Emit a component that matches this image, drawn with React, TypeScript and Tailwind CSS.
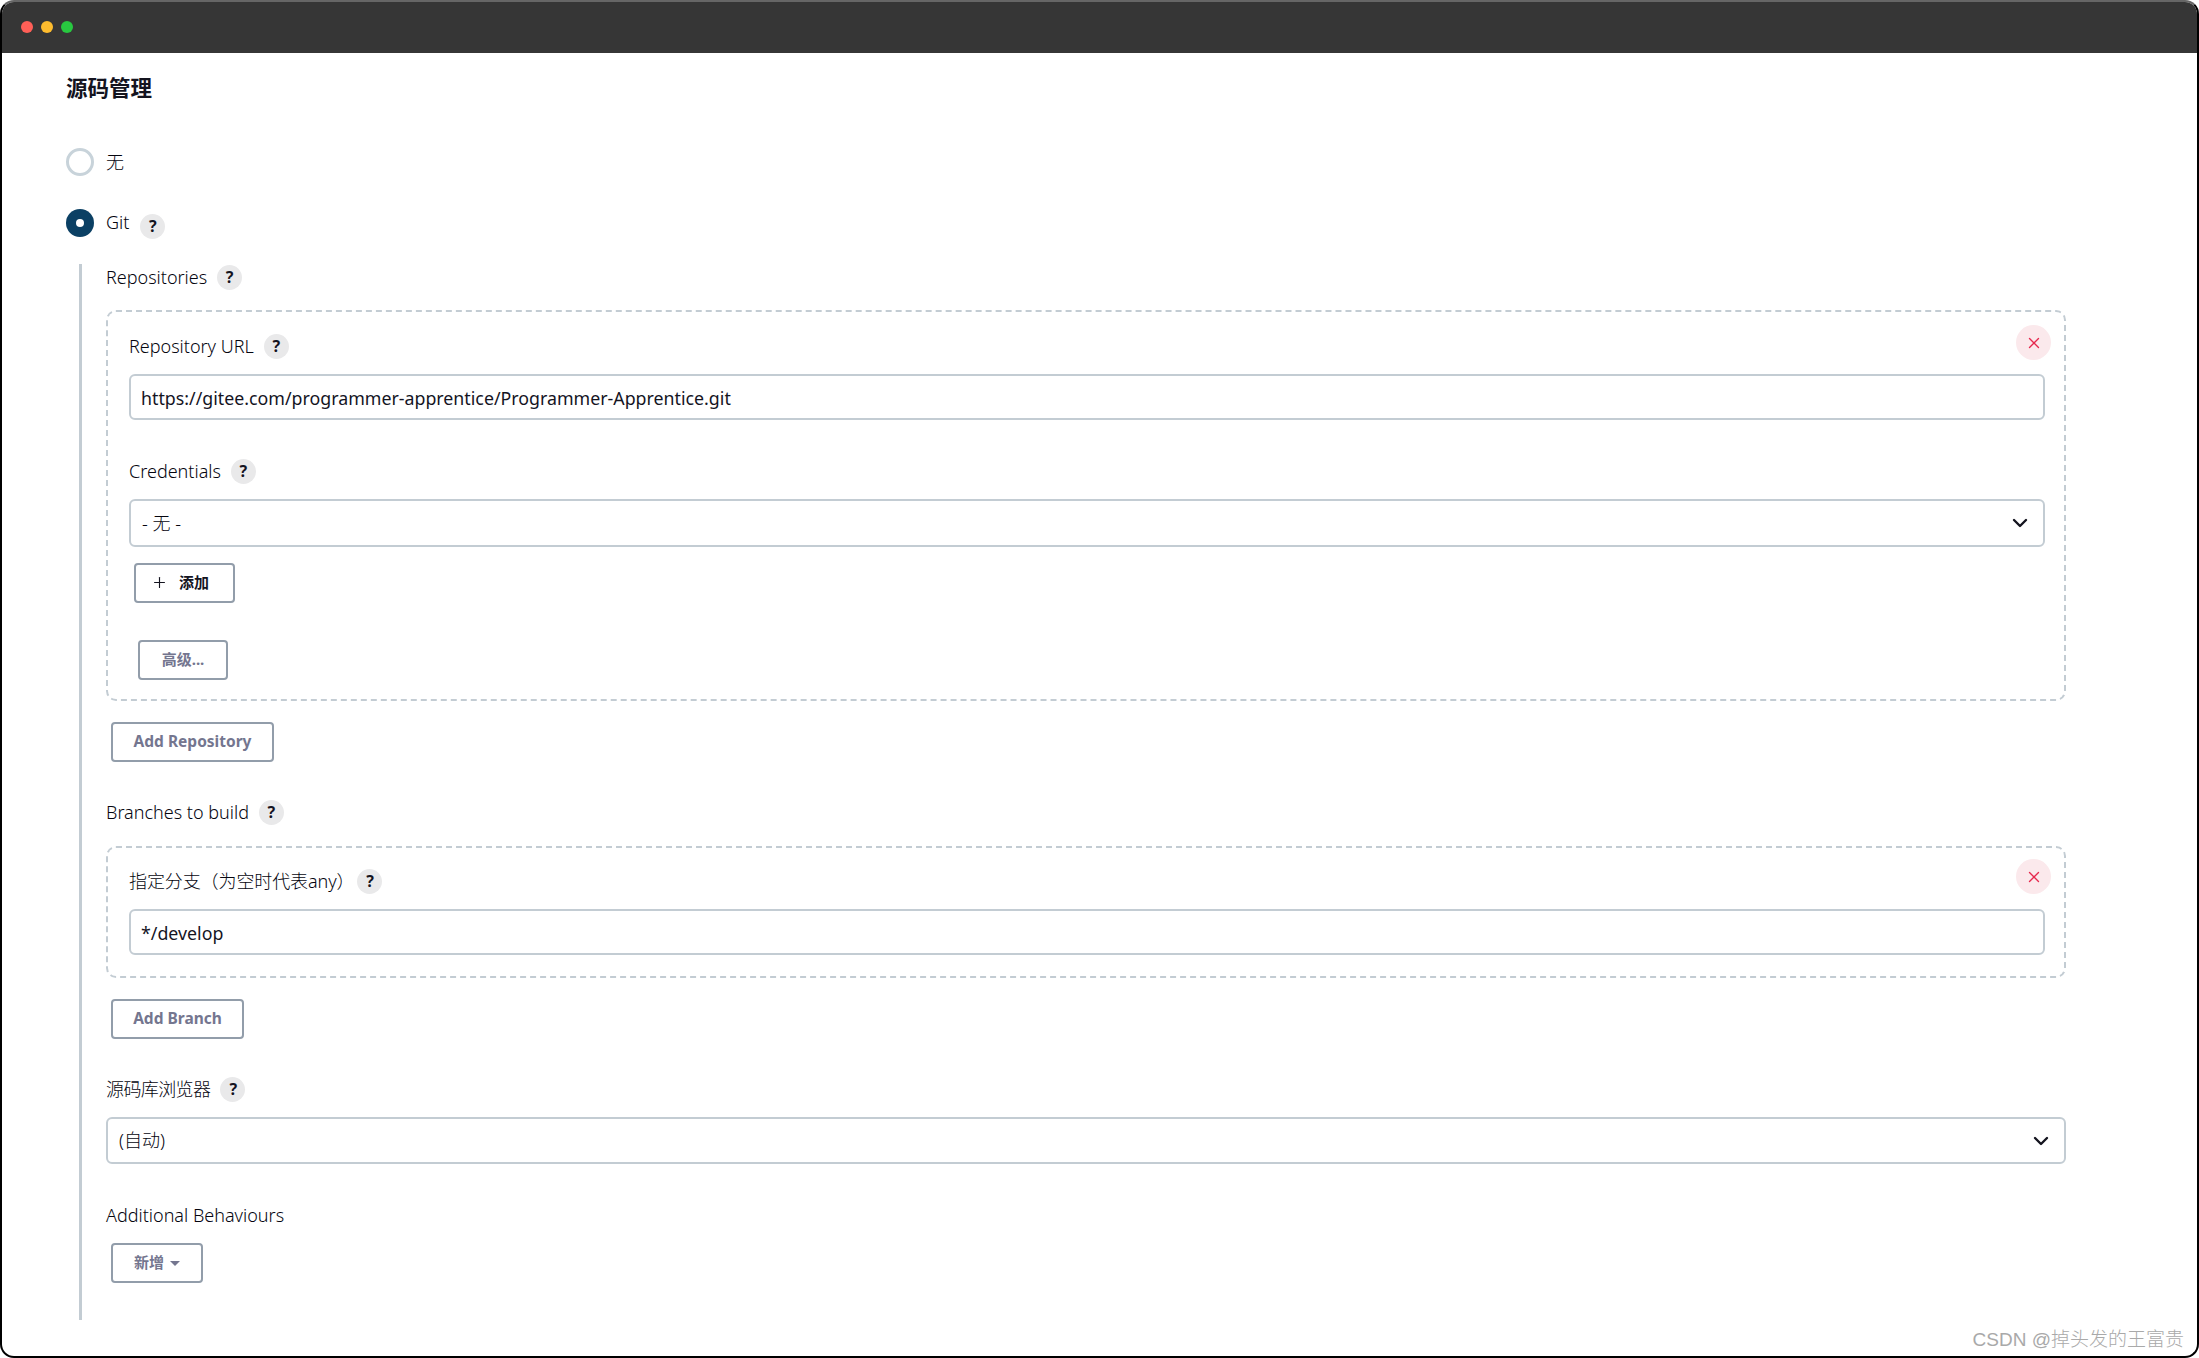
import { ChevronDown, Plus, X } from "lucide-react";

const font = "font-['Noto_Sans','Noto_Sans_CJK_SC',sans-serif]";

function Help({ className = "" }: { className?: string }) {
  return (
    <span className={`flex h-[25px] w-[25px] shrink-0 items-center justify-center rounded-full bg-[#e9e9ea] text-[16px] font-bold text-[#14141f] ${className}`}>
      ?
    </span>
  );
}

function Label({ text, help = true, gap = "ml-[10px]", className = "" }: { text: string; help?: boolean; gap?: string; className?: string }) {
  return (
    <div className={`flex h-[26px] items-center text-[18px] font-light text-[#05050f] ${className}`}>
      <span>{text}</span>
      {help && <Help className={gap} />}
    </div>
  );
}

function Field({ value, className = "" }: { value: string; className?: string }) {
  return (
    <input
      readOnly
      value={value}
      className={`block h-[46px] w-full rounded-[6px] border-2 border-[#c3ccd3] bg-white px-[10px] pt-[2px] text-[17.8px] text-[#14141f] outline-none ${className}`}
    />
  );
}

function Select({ value, className = "" }: { value: string; className?: string }) {
  return (
    <div className={`flex w-full items-center justify-between rounded-[6px] border-2 border-[#c3ccd3] pl-[11px] pr-[11px] text-[18px] font-light text-[#05050f] ${className}`}>
      <span>{value}</span>
      <ChevronDown size={24} strokeWidth={2.4} className="text-[#14141f]" />
    </div>
  );
}

function Btn({ className = "", color = "text-[#74768f]", size = "text-[15.5px]", children }: { className?: string; color?: string; size?: string; children: React.ReactNode }) {
  return (
    <button className={`flex h-[40px] items-center justify-center rounded-[4px] border-2 border-[#929daa] bg-white pb-[1px] font-bold ${size} ${color} ${className}`}>
      {children}
    </button>
  );
}

function Close({ className = "" }: { className?: string }) {
  return (
    <span className={`absolute right-[13px] flex h-[35px] w-[35px] items-center justify-center rounded-full bg-[#fbe9ec] text-[#e6294e] ${className}`}>
      <X size={18} strokeWidth={1.8} />
    </span>
  );
}

function Radio({ checked }: { checked?: boolean }) {
  return checked ? (
    <span className="flex h-[28px] w-[28px] shrink-0 items-center justify-center rounded-full bg-[#0b4064]">
      <span className="h-[8px] w-[8px] rounded-full bg-white" />
    </span>
  ) : (
    <span className="h-[28px] w-[28px] shrink-0 rounded-full border-[3px] border-[#c8d3da] bg-white" />
  );
}

export default function App() {
  return (
    <div className={`${font} relative h-[1358px] w-[2199px] overflow-hidden rounded-[14px] border-2 border-black border-t-[#666666] bg-white`}>
      <div className="flex h-[51px] items-center gap-[8px] bg-[#363636] pb-[2px] pl-[19px]">
        <span className="h-[12px] w-[12px] rounded-full bg-[#ff5f57]" />
        <span className="h-[12px] w-[12px] rounded-full bg-[#febc2e]" />
        <span className="h-[12px] w-[12px] rounded-full bg-[#28c840]" />
      </div>

      <main className="pl-[64px] pt-[20px]">
        <h1 className="h-[30px] text-[21.5px] leading-[30px] font-bold text-[#14141f]">源码管理</h1>

        <div className="mt-[45px] flex items-center gap-[12px] text-[18px] font-light text-[#05050f]">
          <Radio />
          <span>无</span>
        </div>

        <div className="mt-[33px] flex h-[28px] items-center gap-[12px] text-[18px] font-light text-[#05050f]">
          <Radio checked />
          <span className="-mt-[2px]">Git</span>
          <Help className="mt-[6px] ml-[-1px]" />
        </div>

        <section className="ml-[13px] mt-[27px] w-[1987px] border-l-[3px] border-[#c3ccd3] pb-[37px] pl-[24px]">
          <Label text="Repositories" />

          <div className="relative mt-[20px] rounded-[10px] border-2 border-dashed border-[#c3ccd3] pb-[19px] pl-[21px] pr-[19px] pt-[21px]">
            <Close className="top-[13px]" />
            <Label text="Repository URL" />
            <Field value="https://gitee.com/programmer-apprentice/Programmer-Apprentice.git" className="mt-[15px]" />
            <Label text="Credentials" className="mt-[38px]" />
            <Select value="- 无 -" className="mt-[15px] h-[48px]" />
            <Btn color="text-[#14141f]" size="text-[15px]" className="ml-[5px] mt-[16px] w-[101px] gap-[11px] pr-[9px]">
              <Plus size={17} strokeWidth={1.6} />
              添加
            </Btn>
            <Btn size="text-[15px]" className="ml-[9px] mt-[37px] w-[90px]">高级...</Btn>
          </div>

          <Btn className="ml-[5px] mt-[21px] w-[163px]">Add Repository</Btn>

          <Label text="Branches to build" className="mt-[37px]" />

          <div className="relative mt-[21px] rounded-[10px] border-2 border-dashed border-[#c3ccd3] pb-[21px] pl-[21px] pr-[19px] pt-[20px]">
            <Close className="top-[11px]" />
            <Label text="指定分支（为空时代表any）" gap="ml-[3px]" className="tracking-[-0.1px]" />
            <Field value="*/develop" className="mt-[15px]" />
          </div>

          <Btn className="ml-[5px] mt-[21px] w-[133px]">Add Branch</Btn>

          <Label text="源码库浏览器" className="mt-[37px] tracking-[-0.6px]" />
          <Select value="(自动)" className="mt-[15px] h-[47px]" />

          <Label text="Additional Behaviours" help={false} className="mt-[38px]" />
          <Btn size="text-[15px]" className="ml-[5px] mt-[15px] w-[92px] gap-[6px]">
            新增
            <span className="mt-[2px] h-0 w-0 border-x-[5px] border-t-[5px] border-x-transparent border-t-[#74768f]" />
          </Btn>
        </section>
      </main>

      <span className="absolute bottom-[2px] right-[13px] font-['Liberation_Sans','Noto_Sans_CJK_SC',sans-serif] text-[19px] font-light text-[#a9a9a9]">
        CSDN @掉头发的王富贵
      </span>
    </div>
  );
}
